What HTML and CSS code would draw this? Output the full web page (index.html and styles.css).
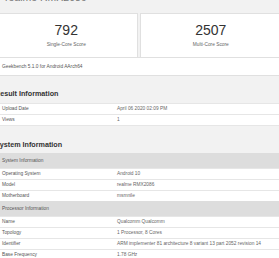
FILE: index.html
```html
<!DOCTYPE html>
<html lang="en">
<head>
  <meta charset="UTF-8" />
  <title>realme RMX2086 - Geekbench</title>
  <link rel="stylesheet" href="styles.css">
</head>
<body>
  <div class="page">
    <h1 class="device">realme RMX2086</h1>

    <!-- scores -->
    <div class="scores">
      <div class="score-card">
        <div class="score">792</div>
        <div class="score-label">Single-Core Score</div>
      </div>
      <div class="score-card">
        <div class="score">2507</div>
        <div class="score-label">Multi-Core Score</div>
      </div>
    </div>
    <div class="version">Geekbench 5.1.0 for Android AArch64</div>

    <!-- result information -->
    <h2 class="section-title">Result Information</h2>
    <div class="info">
      <div class="row"><span class="name">Upload Date</span><span class="value">April 06 2020 02:09 PM</span></div>
      <div class="row"><span class="name">Views</span><span class="value">1</span></div>
    </div>

    <!-- system information -->
    <h2 class="section-title second">System Information</h2>
    <div class="info">
      <div class="row head"><span class="name">System Information</span></div>
      <div class="row"><span class="name">Operating System</span><span class="value">Android 10</span></div>
      <div class="row"><span class="name">Model</span><span class="value">realme RMX2086</span></div>
      <div class="row"><span class="name">Motherboard</span><span class="value">msmnile</span></div>
      <div class="row head"><span class="name">Processor Information</span></div>
      <div class="row"><span class="name">Name</span><span class="value">Qualcomm Qualcomm</span></div>
      <div class="row"><span class="name">Topology</span><span class="value">1 Processor, 8 Cores</span></div>
      <div class="row"><span class="name">Identifier</span><span class="value">ARM implementer 81 architecture 8 variant 13 part 2052 revision 14</span></div>
      <div class="row"><span class="name">Base Frequency</span><span class="value">1.78 GHz</span></div>
    </div>
  </div>
</body>
</html>
```

FILE: styles.css
```css
/* page */
body {
  margin: 0;
  padding: 0;
  font-family: "Liberation Sans", Arial, sans-serif;
  background-color: #f2f2f2;
  overflow: hidden;
}

.page {
  width: 287px;
  margin-left: -5px;
}

/* device name, mostly scrolled off */
.device {
  margin: -9px 0 0;
  padding-left: 10px;
  font-size: 10.5px;
  line-height: 13px;
  font-weight: normal;
  color: #777;
}

/* score cards */
.scores {
  display: flex;
  gap: 2px;
  margin-top: 9px;
}

.score-card {
  flex: 1;
  height: 35px;
  padding-top: 8px;
  background-color: #fff;
  border: 1px solid #e0e0e0;
  border-bottom: none;
  text-align: center;
}

.score-card .score {
  font-size: 14px;
  line-height: 16px;
  color: #333;
}

.score-card .score-label {
  margin-top: 3px;
  font-size: 4.8px;
  line-height: 7px;
  color: #666;
}

.version {
  height: 17px;
  padding-left: 7px;
  background-color: #fff;
  border-top: 1px solid #e0e0e0;
  border-bottom: 1px solid #e0e0e0;
  font-size: 4.8px;
  line-height: 17px;
  color: #555;
}

/* section headings */
.section-title {
  margin: 13px 0 4px;
  font-size: 7.2px;
  line-height: 10px;
  font-weight: bold;
  color: #333;
}
.section-title.second {
  margin-top: 14px;
  margin-bottom: 3px;
}

/* info tables */
.info {
  background-color: #fff;
}

.row {
  display: grid;
  grid-template-columns: 122px 1fr;
  height: 10px;
  border-top: 1px solid #e6e6e6;
  font-size: 4.8px;
  line-height: 10px;
  white-space: nowrap;
}
.row:last-child {
  border-bottom: 1px solid #e6e6e6;
}

.row .name {
  padding-left: 7px;
  color: #555;
}

.row .value {
  color: #666;
}

.row.head {
  height: 14px;
  line-height: 14px;
  background-color: #dddddd;
  border-top-color: #dddddd;
}
```
